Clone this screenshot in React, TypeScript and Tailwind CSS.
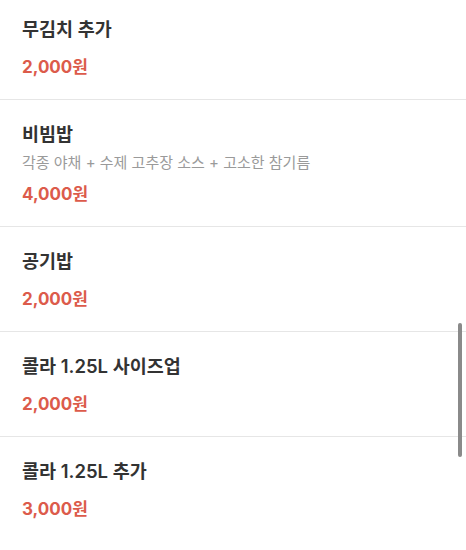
const items = [
  { name: "무김치 추가", price: "2,000원" },
  { name: "비빔밥", desc: "각종 야채 + 수제 고추장 소스 + 고소한 참기름", price: "4,000원" },
  { name: "공기밥", price: "2,000원" },
  { name: "콜라 1.25L 사이즈업", price: "2,000원" },
  { name: "콜라 1.25L 추가", price: "3,000원" },
];

export default function App() {
  return (
    <div
      className="relative h-[550px] w-[466px] overflow-hidden bg-white"
      style={{ fontFamily: 'Inter, "Noto Sans CJK KR", "Noto Sans", sans-serif' }}
    >
      <div className="-mt-[5px] flex flex-col">
        {items.map((item, i) => (
          <div
            key={item.name}
            className={`flex flex-col px-[22px] pt-[21px] pb-[20px] ${
              i < items.length - 1 ? "border-b border-[#e6e6e6]" : ""
            }`}
          >
            <div className="h-[26px] text-[18.5px] leading-[26px] font-semibold text-[#333333]">
              {item.name}
            </div>
            {item.desc && (
              <div className="mt-[6px] h-[20px] text-[15px] leading-[20px] text-[#9a9a9a]">
                {item.desc}
              </div>
            )}
            <div
              className={`${item.desc ? "mt-[9px]" : "mt-[13px]"} h-[24px] text-[17px] leading-[24px] font-bold text-[#dc5b4b]`}
            >
              {item.price}
            </div>
          </div>
        ))}
      </div>
      <div className="absolute left-[458px] top-[323px] h-[134px] w-[4px] rounded-full bg-[#8a8a8a]" />
    </div>
  );
}
